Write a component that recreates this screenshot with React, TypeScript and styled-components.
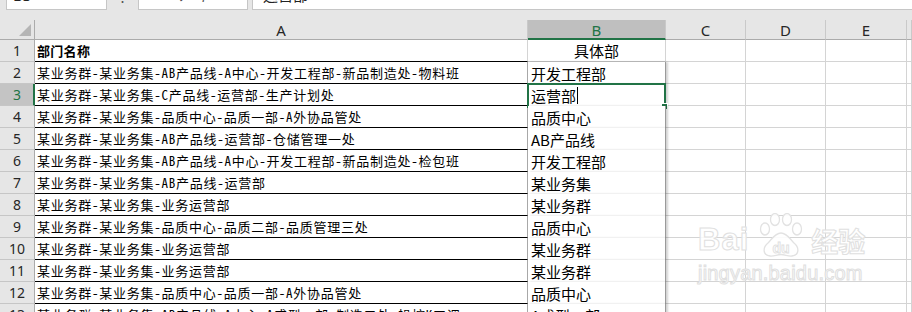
import React from 'react';
import styled, { createGlobalStyle, css } from 'styled-components';

const GlobalStyle = createGlobalStyle`
  html, body {
    margin: 0;
    padding: 0;
    background: #ffffff;
    overflow: hidden;
  }
  body {
    width: 912px;
    height: 312px;
  }
`;

const cjk = `"Noto Sans Mono CJK SC", "Noto Sans CJK SC", sans-serif`;
const ui = `"Noto Sans", "Noto Sans CJK SC", sans-serif`;

const green = '#217346';

// 部门名称 / 具体部
const rows = [
  { a: '部门名称', b: '具体部' },
  { a: '某业务群-某业务集-AB产品线-A中心-开发工程部-新品制造处-物料班', b: '开发工程部' },
  { a: '某业务群-某业务集-C产品线-运营部-生产计划处', b: '运营部' },
  { a: '某业务群-某业务集-品质中心-品质一部-A外协品管处', b: '品质中心' },
  { a: '某业务群-某业务集-AB产品线-运营部-仓储管理一处', b: 'AB产品线' },
  { a: '某业务群-某业务集-AB产品线-A中心-开发工程部-新品制造处-检包班', b: '开发工程部' },
  { a: '某业务群-某业务集-AB产品线-运营部', b: '某业务集' },
  { a: '某业务群-某业务集-业务运营部', b: '某业务群' },
  { a: '某业务群-某业务集-品质中心-品质二部-品质管理三处', b: '品质中心' },
  { a: '某业务群-某业务集-业务运营部', b: '某业务群' },
  { a: '某业务群-某业务集-业务运营部', b: '某业务群' },
  { a: '某业务群-某业务集-品质中心-品质一部-A外协品管处', b: '品质中心' },
  { a: '某业务群-某业务集-AB产品线-A中心-A成型一部-制造二处-操控K工调', b: 'A成型一部' },
];

const columns = [
  { key: 'A', w: 493 },
  { key: 'B', w: 138, active: true },
  { key: 'C', w: 80 },
  { key: 'D', w: 80 },
  { key: 'E', w: 81 },
];

export default function App() {
  return (
    <>
      <GlobalStyle />
      <Sheet>
        <FormulaStrip>
          <NameBox>B3</NameBox>
          <Dots>⋮</Dots>
          <FxBox>
            <FxIcon>✕</FxIcon>
            <FxIcon>✓</FxIcon>
            <FxIcon $italic>fx</FxIcon>
          </FxBox>
          <FormulaInput>运营部</FormulaInput>
        </FormulaStrip>

        <HeaderRow>
          <Corner>
            <CornerTriangle />
          </Corner>
          {columns.map((c) => (
            <ColHead key={c.key} $w={c.w} $active={c.active}>
              {c.key}
            </ColHead>
          ))}
          <ColHead $grow />
        </HeaderRow>

        {rows.map((r, i) => {
          const n = i + 1;
          const active = n === 3;
          return (
            <Row key={n}>
              <RowHead $active={active}>{n}</RowHead>
              <CellA $head={n === 1} $inList={n > 1}>
                {r.a}
              </CellA>
              <CellB $head={n === 1}>
                {r.b}
                {active && (
                  <>
                    <Caret />
                    <Selection>
                      <Handle />
                    </Selection>
                  </>
                )}
              </CellB>
              <Cell $w={80} />
              <Cell $w={80} />
              <Cell $w={81} />
              <Cell $grow />
            </Row>
          );
        })}

        <Watermark>
          <WmTop>
            <WmWord>Bai</WmWord>
            <Paw viewBox="0 0 50 44" width="50" height="44">
              <g fill="rgba(255,255,255,0.9)" stroke="#e2e2e2" strokeWidth="1.3">
                <ellipse cx="9" cy="16" rx="4.5" ry="6" />
                <ellipse cx="19" cy="6.5" rx="4.5" ry="6" />
                <ellipse cx="31" cy="6.5" rx="4.5" ry="6" />
                <ellipse cx="41" cy="16" rx="4.5" ry="6" />
                <path d="M25 20c-6 0-9 6-13 10-5 4-6 12 2 13 4 0.5 7-1.5 11-1.5s7 2 11 1.5c8-1 7-9 2-13-4-4-7-10-13-10z" />
              </g>
              <text
                x="25"
                y="40"
                textAnchor="middle"
                fontFamily='"Liberation Sans", sans-serif'
                fontWeight="bold"
                fontSize="14"
                fill="rgba(255,255,255,0.9)"
                stroke="#e0e0e0"
                strokeWidth="0.9"
              >
                du
              </text>
            </Paw>
            <WmCn>经验</WmCn>
          </WmTop>
          <WmUrl>jingyan.baidu.com</WmUrl>
        </Watermark>
      </Sheet>
    </>
  );
}

const Sheet = styled.div`
  position: relative;
  width: 912px;
  height: 312px;
  overflow: hidden;
  background: #ffffff;
`;

const FormulaStrip = styled.div`
  display: flex;
  align-items: flex-end;
  height: 20px;
  padding: 0 0 10px 6px;
  box-sizing: border-box;
  overflow: hidden;
  background: #e6e6e6;
`;

const BarBox = styled.div`
  flex: none;
  height: 31px;
  box-sizing: border-box;
  background: #ffffff;
  border: 1px solid #c6c6c6;
  display: flex;
  align-items: center;
  font-family: ${ui};
  font-size: 15px;
  color: #222;
`;

const NameBox = styled(BarBox)`
  width: 101px;
  padding-left: 6px;
`;

const Dots = styled.div`
  width: 31px;
  height: 31px;
  display: flex;
  align-items: center;
  justify-content: center;
  font-family: ${ui};
  font-size: 15px;
  color: #555;
  padding-right: 1px;
  box-sizing: border-box;
`;

const FxBox = styled(BarBox)`
  width: 110px;
  padding-left: 12px;
  gap: 14px;
  color: #555;
`;

const FxIcon = styled.span<{ $italic?: boolean }>`
  font-size: 15px;
  ${(p) =>
    p.$italic &&
    css`
      font-style: italic;
      font-family: "Liberation Serif", serif;
    `}
`;

const FormulaInput = styled(BarBox)`
  flex: 1;
  margin-left: 4px;
  padding-left: 10px;
  font-family: ${cjk};
  border-right: none;
`;

const HeaderRow = styled.div`
  display: flex;
  height: 20px;
  background: #e6e6e6;
`;

const Corner = styled.div`
  position: relative;
  flex: none;
  width: 35px;
  box-sizing: border-box;
  border-right: 1px solid #ababab;
  border-bottom: 1px solid #ababab;
`;

const CornerTriangle = styled.div`
  position: absolute;
  right: 3px;
  bottom: 3px;
  width: 0;
  height: 0;
  border-left: 12px solid transparent;
  border-bottom: 12px solid #b5b5b5;
`;

const ColHead = styled.div<{ $w?: number; $active?: boolean; $grow?: boolean }>`
  flex: ${(p) => (p.$grow ? '1' : 'none')};
  width: ${(p) => (p.$w ? `${p.$w}px` : 'auto')};
  box-sizing: border-box;
  display: flex;
  align-items: center;
  justify-content: center;
  font-family: ${ui};
  font-size: 15px;
  color: #262626;
  border-right: 1px solid #c9c9c9;
  border-bottom: 1px solid #ababab;
  ${(p) =>
    p.$active &&
    css`
      background: #bfbfbf;
      color: ${green};
      border-bottom: 2px solid ${green};
      padding-top: 1px;
    `}
`;

const Row = styled.div`
  display: flex;
  height: 22px;
`;

const RowHead = styled.div<{ $active?: boolean }>`
  flex: none;
  width: 35px;
  box-sizing: border-box;
  display: flex;
  align-items: center;
  justify-content: center;
  background: #e6e6e6;
  border-right: 1px solid #ababab;
  border-bottom: 1px solid #c6c6c6;
  font-family: ${ui};
  font-size: 14px;
  color: #262626;
  ${(p) =>
    p.$active &&
    css`
      background: #c4c4c4;
      color: ${green};
      border-right: 2px solid ${green};
      padding-left: 1px;
    `}
`;

const CellA = styled.div<{ $head?: boolean; $inList?: boolean }>`
  flex: none;
  width: 493px;
  box-sizing: border-box;
  padding-left: 2px;
  display: flex;
  align-items: center;
  white-space: nowrap;
  overflow: hidden;
  font-family: ${cjk};
  font-size: 13px;
  letter-spacing: ${(p) => (p.$head ? '0.3px' : '0.75px')};
  color: #000000;
  border-bottom: 1px solid #000000;
  border-right: 1px solid ${(p) => (p.$inList ? '#a8a8a8' : '#d4d4d4')};
  font-weight: ${(p) => (p.$head ? 700 : 400)};
`;

const CellB = styled.div<{ $head?: boolean }>`
  position: relative;
  z-index: 1;
  flex: none;
  width: 138px;
  box-sizing: border-box;
  padding-left: 3px;
  display: flex;
  align-items: center;
  white-space: nowrap;
  font-family: "Noto Sans CJK SC", sans-serif;
  font-size: 15px;
  color: #000000;
  background: #ffffff;
  ${(p) =>
    p.$head
      ? css`
          justify-content: center;
          padding-left: 0;
          border-right: 1px solid #d4d4d4;
          border-bottom: 1px solid #c0c0c0;
        `
      : css`
          border-right: 1px solid #9a9a9a;
          box-shadow: 2px 0 2px rgba(0, 0, 0, 0.18);
        `}
`;

const Caret = styled.span`
  display: inline-block;
  width: 1px;
  height: 17px;
  margin-left: 1px;
  background: #000000;
`;

const Selection = styled.div`
  position: absolute;
  top: -1px;
  left: -1px;
  right: -1px;
  bottom: -2px;
  border: 2px solid ${green};
  pointer-events: none;
`;

const Handle = styled.div`
  position: absolute;
  right: -4px;
  bottom: -4px;
  width: 5px;
  height: 5px;
  background: ${green};
  border: 1px solid #ffffff;
`;

const Cell = styled.div<{ $w?: number; $grow?: boolean }>`
  flex: ${(p) => (p.$grow ? '1' : 'none')};
  width: ${(p) => (p.$w ? `${p.$w}px` : 'auto')};
  box-sizing: border-box;
  border-right: 1px solid #d4d4d4;
  border-bottom: 1px solid #d4d4d4;
`;

const Watermark = styled.div`
  position: absolute;
  left: 698px;
  top: 213px;
  display: flex;
  flex-direction: column;
  pointer-events: none;
`;

const WmTop = styled.div`
  display: flex;
  align-items: flex-end;
  gap: 3px;
`;

const outlined = css`
  color: rgba(255, 255, 255, 0.9);
  -webkit-text-stroke: 1px #e0e0e0;
`;

const WmWord = styled.span`
  ${outlined};
  font-family: "Liberation Sans", sans-serif;
  font-weight: 700;
  font-size: 31px;
  line-height: 30px;
  letter-spacing: 1px;
  margin-bottom: 2px;
`;

const Paw = styled.svg`
  display: block;
  margin: 0 2px 0 4px;
`;

const WmCn = styled.span`
  ${outlined};
  font-family: "Noto Sans CJK SC", sans-serif;
  font-weight: 700;
  font-size: 27px;
  line-height: 30px;
  margin-bottom: 1px;
`;

const WmUrl = styled.span`
  ${outlined};
  font-family: "Liberation Sans", sans-serif;
  font-size: 20px;
  line-height: 22px;
  margin-top: 5px;
  letter-spacing: 0.2px;
`;
